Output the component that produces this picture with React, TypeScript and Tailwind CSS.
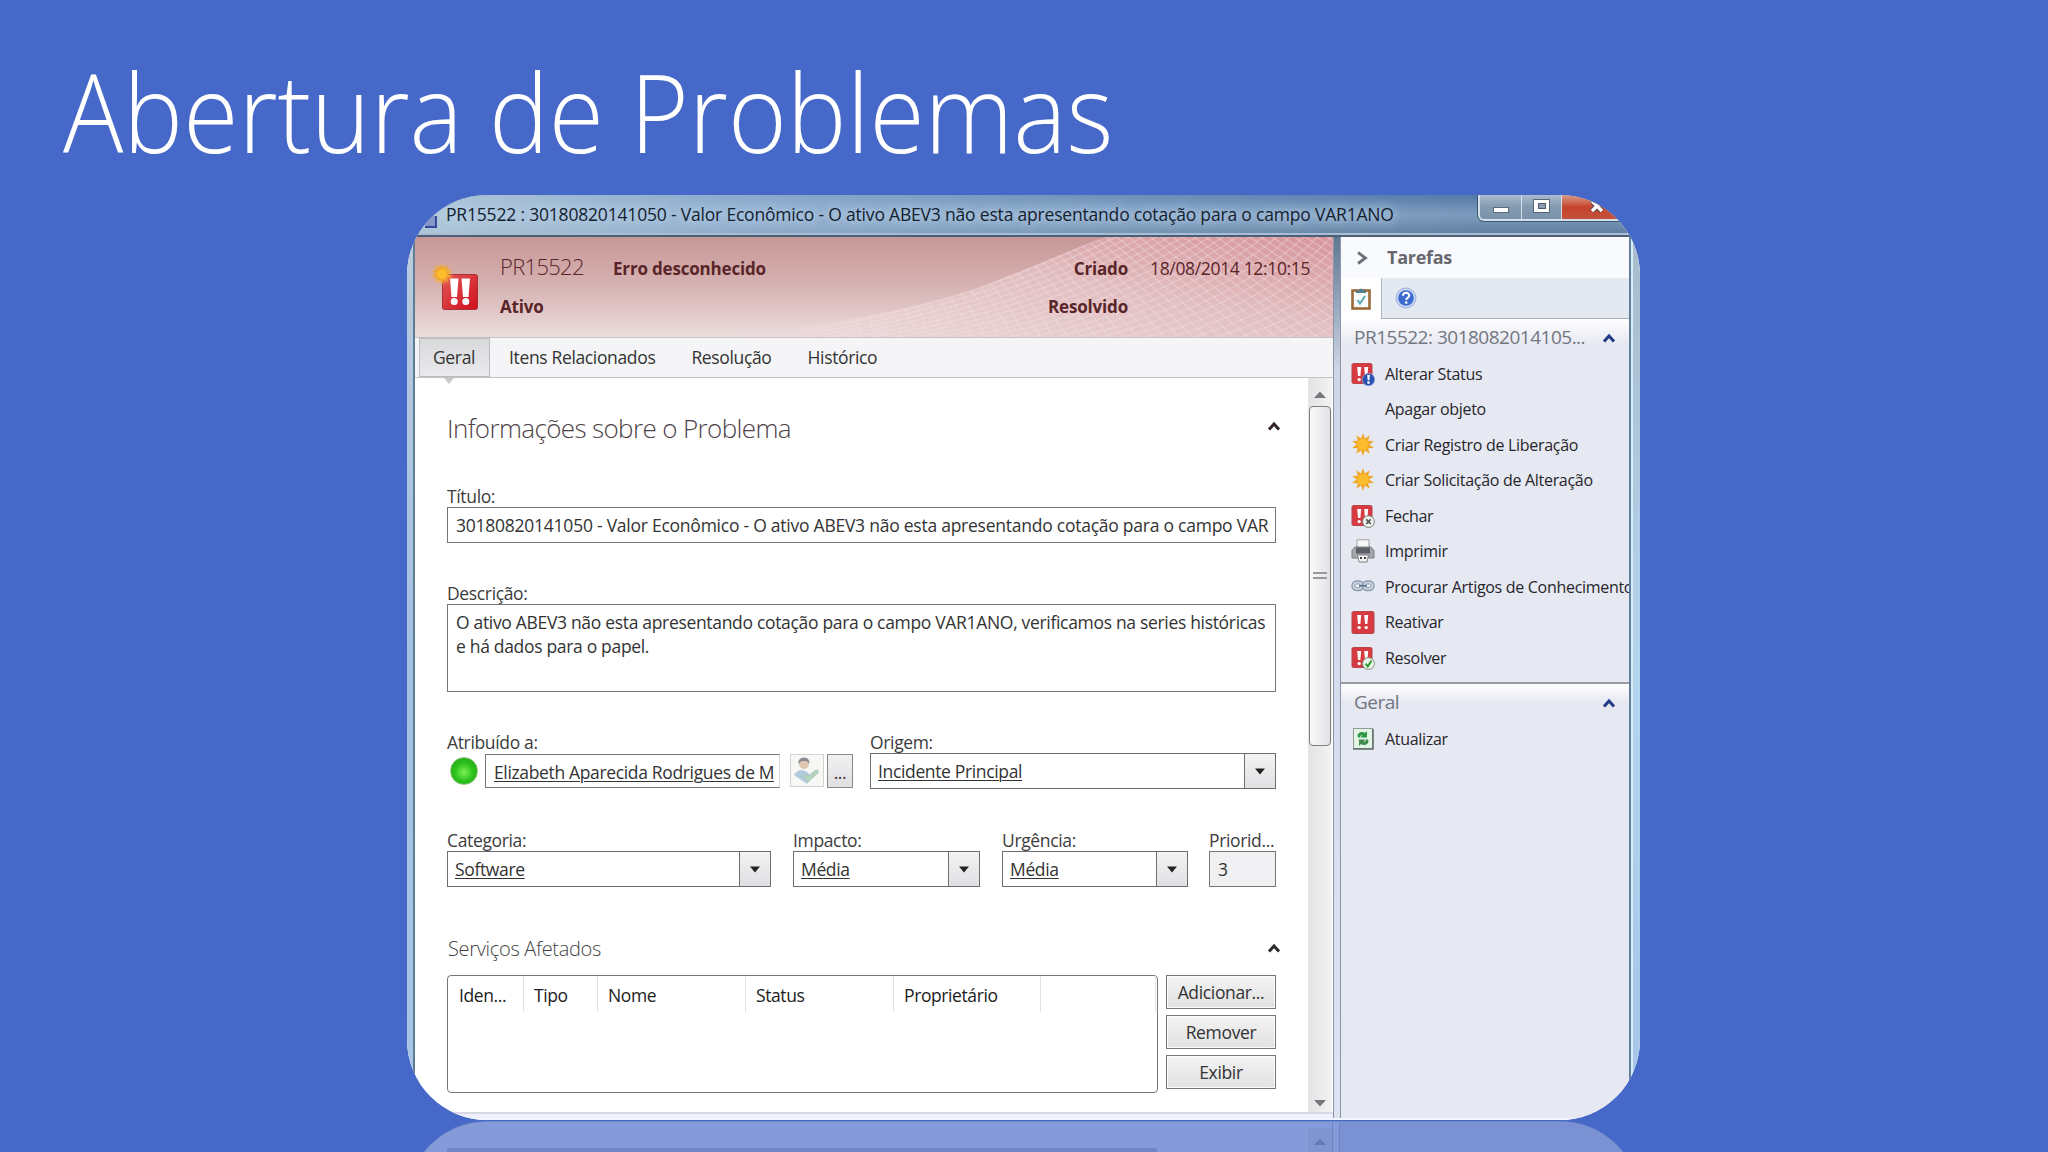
import React from "react";

type TaskIconName = "status" | "none" | "star" | "close" | "print" | "link" | "alert" | "resolve";

const TABS = ["Itens Relacionados", "Resolução", "Histórico"];

const TASKS: { label: string; icon: TaskIconName }[] = [
  { label: "Alterar Status", icon: "status" },
  { label: "Apagar objeto", icon: "none" },
  { label: "Criar Registro de Liberação", icon: "star" },
  { label: "Criar Solicitação de Alteração", icon: "star" },
  { label: "Fechar", icon: "close" },
  { label: "Imprimir", icon: "print" },
  { label: "Procurar Artigos de Conhecimento", icon: "link" },
  { label: "Reativar", icon: "alert" },
  { label: "Resolver", icon: "resolve" },
];

const COLUMNS = [
  { label: "Iden...", width: "w-[76px] pl-[11px]" },
  { label: "Tipo", width: "w-[74px] pl-2.5" },
  { label: "Nome", width: "w-[148px] pl-2.5" },
  { label: "Status", width: "w-[148px] pl-2.5" },
  { label: "Proprietário", width: "w-[147px] pl-2.5" },
  { label: "", width: "w-[115px]" },
];

/* ---------- icons ---------- */

const StarShape = ({ cx, cy, r }: { cx: number; cy: number; r: number }) => {
  const points = Array.from({ length: 20 }, (_, i) => {
    const radius = i % 2 ? r * 0.55 : r;
    const a = (Math.PI * i) / 10;
    return `${(cx + radius * Math.sin(a)).toFixed(2)},${(cy - radius * Math.cos(a)).toFixed(2)}`;
  }).join(" ");
  return (
    <>
      <polygon points={points} fill="#f0a728" />
      <circle cx={cx} cy={cy} r={r * 0.48} fill="#fcbd2c" />
    </>
  );
};

const AlertTile = ({ small }: { small?: boolean }) => (
  <>
    <rect x="1" y="1.5" width={small ? 20 : 22} height={small ? 20 : 22} rx="1.5" fill="#d83a42" stroke="#b5444b" />
    <path d="M6.2 5h4l-.8 9H7zM13.2 5h4l-.8 9H14z" fill="#fff" />
    <circle cx="8.2" cy="17.6" r="1.7" fill="#fff" />
    <circle cx="15.2" cy="17.6" r="1.7" fill="#fff" />
  </>
);

const TaskIcon = ({ name }: { name: TaskIconName }) => (
  <svg viewBox="0 0 24 24" className="h-6 w-6 shrink-0">
    {name === "status" && (
      <>
        <AlertTile small />
        <circle cx="17.5" cy="17.6" r="6.2" fill="#2a52b0" stroke="#8ea6d8" strokeWidth=".8" />
        <path d="M16.2 13h2.7l-.5 5.200h-1.700z" fill="#fff" />
        <circle cx="17.5" cy="20.600" r="1.300" fill="#fff" />
      </>
    )}
    {name === "star" && <StarShape cx={12} cy={11.5} r={11.5} />}
    {name === "close" && (
      <>
        <AlertTile small />
        <circle cx="17.500" cy="17.600" r="5.900" fill="#eef0ee" stroke="#777d78" />
        <path d="m15.300 15.400 4.400 4.400m0-4.400-4.400 4.400" stroke="#56605a" strokeWidth="1.800" />
      </>
    )}
    {name === "print" && (
      <>
        <path d="M6 .8h12V10H6z" fill="#f8f8f8" stroke="#a2a2a2" />
        <path d="M1 11.500 4 8h16l3 3.500V19H1z" fill="#a3a6ab" stroke="#7c7f84" />
        <path d="M5 8.500h14v6H5z" fill="#5c6065" />
        <path d="M6.500 16h11L16 23H8z" fill="#f4f4f4" stroke="#7e8186" />
        <path d="M9 19h2m2 0h2" stroke="#444" strokeWidth="2" />
      </>
    )}
    {name === "link" && (
      <g fill="none" stroke="#8a9db0">
        <rect x="1" y="6" width="11.500" height="9.500" rx="4.500" fill="#c9d4df" strokeWidth="1.400" />
        <rect x="11.500" y="6" width="11.500" height="9.500" rx="4.500" fill="#c9d4df" strokeWidth="1.400" />
        <rect x="4" y="9" width="5.500" height="3.500" rx="1.700" fill="#eef2f7" />
        <rect x="14.500" y="9" width="5.500" height="3.500" rx="1.700" fill="#eef2f7" />
        <path d="M8 10.800h8" stroke="#62778c" strokeWidth="1.800" />
      </g>
    )}
    {name === "alert" && <AlertTile />}
    {name === "resolve" && (
      <>
        <AlertTile small />
        <circle cx="17.500" cy="17.600" r="5.900" fill="#eef7ec" stroke="#7f8f80" />
        <path d="m14.600 17.600 2.200 2.800 3.700-5.800" fill="none" stroke="#2f9e38" strokeWidth="2" />
      </>
    )}
  </svg>
);

const RecordIcon = () => (
  <svg viewBox="0 0 50 50" className="h-[50px] w-[50px]">
    <defs>
      <linearGradient id="tile" x1="0" y1="0" x2="1" y2="1">
        <stop offset="0" stopColor="#e25a58" />
        <stop offset="1" stopColor="#cf0f1c" />
      </linearGradient>
      <radialGradient id="glow">
        <stop offset=".4" stopColor="#f8b52a" stopOpacity=".8" />
        <stop offset="1" stopColor="#f0a75c" stopOpacity="0" />
      </radialGradient>
    </defs>
    <rect x="12.500" y="11.500" width="35" height="35" rx="2" fill="url(#tile)" stroke="#a83236" />
    <path d="M20 15.500h8.500L27 34h-5.500zM31.500 15.500H40L38.500 34H33z" fill="#fff" />
    <circle cx="24.200" cy="38.500" r="3.500" fill="#fff" />
    <circle cx="35.800" cy="38.500" r="3.500" fill="#fff" />
    <circle cx="12" cy="11" r="12" fill="url(#glow)" />
    <StarShape cx={12} cy={11} r={10} />
  </svg>
);

const Caret = ({ color }: { color: string }) => (
  <svg viewBox="0 0 14 10" className="h-2.5 w-3.5">
    <path d="M2 8.500 7 3l5 5.500" fill="none" stroke={color} strokeWidth="3" />
  </svg>
);

const DownArrow = () => (
  <svg viewBox="0 0 12 7" className="h-[7px] w-3">
    <path d="M1 .5h10L6 6.500z" fill="#222" />
  </svg>
);

const HeaderMesh = () => (
  <svg viewBox="0 0 918 100" className="absolute inset-0 h-full w-full">
    <defs>
      <linearGradient id="mesh" x1="0" y1="1" x2="1" y2="0">
        <stop offset="0" stopColor="#ecdddd" />
        <stop offset=".55" stopColor="#e2bfc1" />
        <stop offset="1" stopColor="#d6959b" />
      </linearGradient>
      <clipPath id="wing">
        <path d="M310 100C410 86 480 78 560 52 620 30 640 18 691 0H918V100Z" />
      </clipPath>
    </defs>
    <g clipPath="url(#wing)">
      <path d="M300 0H918V100H300Z" fill="url(#mesh)" />
      <g fill="none" stroke="#f6e4e5" strokeOpacity=".32" strokeWidth="1.500">
        {Array.from({ length: 26 }, (_, i) => (
          <path key={i} d={`M${310 + i * 24} 104Q${520 + i * 20} ${84 - i} ${700 + i * 13} -6`} />
        ))}
        {Array.from({ length: 48 }, (_, i) => (
          <path key={i} d={`M${400 + i * 11} -4Q${440 + i * 12} 50 ${446 + i * 14} 104`} />
        ))}
      </g>
    </g>
  </svg>
);

/* ---------- form controls ---------- */

const Label = ({ children }: { children: React.ReactNode }) => (
  <div className="h-[22px] whitespace-nowrap leading-[22px] text-[#3c3c3c]">{children}</div>
);

const SelectField = ({ label, value, className }: { label: string; value: string; className: string }) => (
  <div className={className}>
    <Label>{label}</Label>
    <div className="flex h-9 items-center border border-[#6e6e72] bg-white">
      <span className="flex-1 pl-[7px] underline decoration-1 underline-offset-2">{value}</span>
      <span className="flex h-full w-[31px] items-center justify-center border-l border-[#6e6e72] bg-gradient-to-b from-[#f3f3f3] to-[#e0e0e3]">
        <DownArrow />
      </span>
    </div>
  </div>
);

const SideButton = ({ children }: { children: React.ReactNode }) => (
  <button className="flex h-[34px] items-center justify-center border border-[#77777a] bg-gradient-to-b from-[#f3f3f3] to-[#e1e1e3] shadow-[inset_0_0_0_1px_#fafafa]">
    {children}
  </button>
);

/* ---------- window parts ---------- */

const TitleBar = () => (
  <div className="flex h-[42px] shrink-0 border-b-2 border-[#4a6079] bg-gradient-to-b from-[#5279a8] via-[#7d9cbd] to-[#5f7e9f] shadow-[inset_0_-2px_0_#a9bed2]">
    <div className="flex h-[38px] w-[1071px] items-center bg-gradient-to-r from-[#c3d8e4]/80 via-[#a4c0dc]/70 via-30% to-transparent pl-[18px]">
      <div className="mt-4 h-3 w-3 border-b-2 border-r-2 border-[#39479a] bg-[#8796c8]" />
      <span className="ml-[9px] whitespace-nowrap tracking-[-0.19px] text-[#14212f] [text-shadow:0_0_8px_#b9d2ea,0_0_12px_#b9d2ea]">
        PR15522 : 30180820141050 - Valor Econômico - O ativo ABEV3 não esta apresentando cotação para o campo VAR1ANO
      </span>
    </div>
    <div className="flex h-[26px] flex-1 rounded-bl-md border-b-2 border-l-2 border-[#d3dfea] bg-gradient-to-b from-[#a9bccf] via-[#8399b0] to-[#7b93ab] outline outline-1 outline-[#3f566e]">
      <div className="flex w-[42px] items-center justify-center border-r border-[#d3dfea] pt-1.5">
        <div className="h-[6px] w-4 border border-[#5b6b7c] bg-white" />
      </div>
      <div className="flex w-10 items-center justify-center border-r border-[#d3dfea] pb-0.5">
        <div className="flex h-3.5 w-[17px] items-center justify-center border border-[#56677a] bg-white">
          <div className="h-1.5 w-2 border border-[#4a5b6d] bg-[#8b9cad]" />
        </div>
      </div>
      <div className="flex-1 bg-gradient-to-b from-[#d99a86] via-[#c4432c] to-[#c6513a] pl-[27px]">
        <svg viewBox="0 0 16 14" className="mt-1 h-3.5 w-4">
          <path d="m3 2 10 10M13 2 3 12" stroke="#6a4a48" strokeWidth="5.500" />
          <path d="m3 2 10 10M13 2 3 12" stroke="#fff" strokeWidth="3.300" />
        </svg>
      </div>
    </div>
  </div>
);

const RecordHeader = () => (
  <div className="relative h-[100px] bg-gradient-to-b from-[#c79797] via-[#d7b3b3] to-[#ebdcdc]">
    <HeaderMesh />
    <div className="relative flex pl-[15px] pt-2.5 text-[17px] font-bold tracking-[-0.18px] text-[#5a2529]">
      <div className="pt-4">
        <RecordIcon />
      </div>
      <div className="flex-1 pl-5">
        <div className="flex h-[38px] items-baseline leading-[38px]">
          <span className="w-[113px] text-[22px] font-light tracking-[-0.7px]">PR15522</span>
          <span>Erro desconhecido</span>
          <span className="ml-auto">Criado</span>
          <span className="ml-[22px] mr-[23px] w-40 whitespace-nowrap text-[17.5px] font-normal tracking-[-0.34px]">
            18/08/2014 12:10:15
          </span>
        </div>
        <div className="mt-[3px] flex h-[38px] justify-between pr-[205px] leading-[38px]">
          <span>Ativo</span>
          <span>Resolvido</span>
        </div>
      </div>
    </div>
  </div>
);

const TabStrip = () => (
  <div className="flex h-[41px] border-b border-t border-[#c3c3c6] bg-[#f5f5f7] pl-1 leading-[38px]">
    <div className="relative h-[39px] w-[71px] border border-[#bdbdc0] bg-gradient-to-b from-[#d9d9db] to-[#eaeaec] pl-[13px] leading-[37px]">
      Geral
      <div className="absolute left-[24px] top-[39px] h-0 w-0 border-x-[5px] border-t-[6px] border-x-transparent border-t-[#c9c9cc]" />
    </div>
    <div className="flex gap-9 pl-[19px]">
      {TABS.map((tab) => (
        <span key={tab}>{tab}</span>
      ))}
    </div>
  </div>
);

const ProblemForm = () => (
  <div className="w-[893px] px-8 pt-8">
    <div className="-mr-[5px] flex h-9 items-center justify-between">
      <h2 className="text-[26px] font-light leading-9 tracking-[-0.63px] text-[#4d4248]">Informações sobre o Problema</h2>
      <div className="pb-1">
        <Caret color="#33252a" />
      </div>
    </div>

    <div className="mt-[39px]">
      <Label>Título:</Label>
      <div className="flex h-9 items-center overflow-hidden whitespace-nowrap border border-[#77777a] pl-2 pt-px tracking-[-0.245px]">
        30180820141050 - Valor Econômico - O ativo ABEV3 não esta apresentando cotação para o campo VAR
      </div>
    </div>

    <div className="mt-[39px]">
      <Label>Descrição:</Label>
      <div className="h-[88px] border border-[#77777a] pl-2 pt-[5px] leading-6 tracking-[-0.32px]">
        O ativo ABEV3 não esta apresentando cotação para o campo VAR1ANO, verificamos na series históricas
        <br />e há dados para o papel.
      </div>
    </div>

    <div className="mt-[39px] flex">
      <div className="w-[423px]">
        <Label>Atribuído a:</Label>
        <div className="flex pt-px">
          <div className="ml-[3px] mt-[3px] h-7 w-7 rounded-full border border-[#8cc47c] bg-[radial-gradient(circle_at_50%_55%,#7df05a_0%,#2fc41d_45%,#1a9a12_100%)]" />
          <div className="ml-[7px] flex h-[34px] w-[295px] items-center border border-[#77777a] border-r-[#d5d5d8] pl-2 pt-0.5">
            <span className="w-[280px] overflow-hidden whitespace-nowrap underline decoration-1 underline-offset-2">
              Elizabeth Aparecida Rodrigues de M
            </span>
          </div>
          <div className="ml-2.5 h-[33px] w-[34px] border border-[#d3d5d3] bg-[#f7f8f5]">
            <svg viewBox="0 0 32 31" className="h-full w-full">
              <path d="M3 20q3-5 8-5 6 1 9 7l-4 7z" fill="#b4cbdf" />
              <circle cx="13" cy="9" r="5" fill="#e0c6b3" />
              <path d="M7.500 9q-1-6 5.500-6.500 5.500.2 5.500 6l-3-2.600-5 .2z" fill="#8b8a92" />
              <path d="m12 21 5 6 10-9v-3l-3 .5-6.500 5.500-3-2z" fill="#b4d5bd" stroke="#9dbdb2" strokeWidth=".7" />
            </svg>
          </div>
          <div className="ml-[3px] flex h-[34px] w-[26px] items-center justify-center border border-[#88888b] bg-gradient-to-b from-[#f1f1f2] to-[#dfdfe2] pt-0.5">
            ...
          </div>
        </div>
      </div>
      <SelectField label="Origem:" value="Incidente Principal" className="w-[406px]" />
    </div>

    <div className="mt-10 flex">
      <SelectField label="Categoria:" value="Software" className="w-[324px]" />
      <SelectField label="Impacto:" value="Média" className="ml-[22px] w-[187px]" />
      <SelectField label="Urgência:" value="Média" className="ml-[22px] w-[186px]" />
      <div className="ml-[21px] w-[67px] flex-1">
        <Label>Priorid...</Label>
        <div className="flex h-9 items-center border border-[#77777a] bg-[#f0f0f2] pl-2">3</div>
      </div>
    </div>

    <div className="-mr-[5px] mt-12 flex h-7 items-center justify-between pl-px">
      <h3 className="text-xl font-light leading-7 tracking-[-0.32px] text-[#3f3f42]">Serviços Afetados</h3>
      <div className="pb-0.5">
        <Caret color="#2a2a2c" />
      </div>
    </div>

    <div className="mt-3 flex gap-2">
      <div className="h-[118px] w-[711px] rounded-sm border border-[#77777a]">
        <div className="flex h-9">
          {COLUMNS.map((col) => (
            <div key={col.width + col.label} className={`${col.width} border-r border-[#e3e0e6] pt-1 leading-[30px] tracking-[-0.4px] text-[#222]`}>
              {col.label}
            </div>
          ))}
        </div>
      </div>
      <div className="flex w-[110px] flex-col gap-1.5">
        <SideButton>Adicionar...</SideButton>
        <SideButton>Remover</SideButton>
        <SideButton>Exibir</SideButton>
      </div>
    </div>
  </div>
);

const ScrollBar = () => (
  <div className="flex w-6 flex-col items-center bg-gradient-to-r from-[#e3e3e5] to-[#f3f3f4]">
    <svg viewBox="0 0 12 7" className="mt-[13px] h-[7px] w-3">
      <path d="M0 7h12L6 .5z" fill="#77777b" />
    </svg>
    <div className="mt-2 flex h-[340px] w-[22px] flex-col items-center justify-center gap-[3px] rounded-sm border border-[#7d7d82] bg-gradient-to-r from-[#fafafa] to-[#e2e2e6] pb-0.5">
      <div className="h-0.5 w-3.5 bg-[#98989c]" />
      <div className="h-0.5 w-3.5 bg-[#98989c]" />
    </div>
    <svg viewBox="0 0 12 7" className="mb-[5px] mt-auto h-[7px] w-3">
      <path d="M0 0h12L6 6.500z" fill="#77777b" />
    </svg>
  </div>
);

const TasksPane = () => (
  <div className="flex w-[288px] flex-col overflow-hidden bg-[#e6e8f2] text-base tracking-[-0.3px] text-[#26262b]">
    <div className="flex h-[41px] shrink-0 items-center bg-[#f9fafe] pl-[15px]">
      <svg viewBox="0 0 12 14" className="h-3.5 w-3">
        <path d="m2 1.500 7.500 5.500L2 12.500" fill="none" stroke="#6c6f76" strokeWidth="2.800" />
      </svg>
      <span className="ml-[19px] pb-0.5 text-lg font-bold tracking-[-0.27px] text-[#66686e]">Tarefas</span>
    </div>

    <div className="flex h-[41px] shrink-0">
      <div className="flex w-10 items-center justify-center bg-white">
        <svg viewBox="0 0 20 22" className="h-[22px] w-5">
          <rect x="1.500" y="2.500" width="17" height="18" fill="#f7f9fb" stroke="#9a6a38" strokeWidth="2.600" />
          <path d="M5 5V2.500h3q2-4 4 0h3V5z" fill="#4e7f92" />
          <path d="m6.500 12 2.500 3.500 5-7.500" fill="none" stroke="#5aa9b4" strokeWidth="2" />
        </svg>
      </div>
      <div className="flex flex-1 items-center border-b border-l border-[#aeb2bd] bg-[#e4e8f1] pl-[13px]">
        <svg viewBox="0 0 22 22" className="h-[22px] w-[22px]">
          <circle cx="11" cy="11" r="10" fill="#cbd7f3" stroke="#9db2e2" />
          <circle cx="11" cy="11" r="7.800" fill="#3d6ad0" />
          <path d="M8 8.800q0-3 3-3t3.200 2.700q0 1.600-1.700 2.400-1.200.6-1.200 2.100" fill="none" stroke="#fff" strokeWidth="2" />
          <circle cx="11.200" cy="15.600" r="1.300" fill="#fff" />
        </svg>
      </div>
    </div>

    <div className="flex h-[37px] shrink-0 items-center justify-between bg-gradient-to-b from-white to-[#e6e8f2] to-70% px-[13px]">
      <span className="text-[19px] tracking-[-0.5px] text-[#73767f]">PR15522: 3018082014105...</span>
      <Caret color="#233a86" />
    </div>
    {TASKS.map((task) => (
      <div key={task.label} className="flex h-[35.5px] shrink-0 items-center gap-2.5 whitespace-nowrap pl-[10px]">
        <TaskIcon name={task.icon} />
        <span>{task.label}</span>
      </div>
    ))}

    <div className="mt-1.5 flex h-10 shrink-0 items-center justify-between border-t-2 border-[#9a9ca4] bg-gradient-to-b from-white to-[#e6e8f2] to-50% px-[13px]">
      <span className="text-[19px] tracking-[-0.5px] text-[#73767f]">Geral</span>
      <Caret color="#233a86" />
    </div>
    <div className="flex h-[35.5px] shrink-0 items-center gap-2.5 pl-[10px]">
      <svg viewBox="0 0 24 24" className="h-6 w-6">
        <rect x="2.500" y="1.500" width="19" height="20" fill="#e3f3e4" stroke="#8f9a95" />
        <path d="M2 22h20V2" fill="none" stroke="#5d6b66" strokeWidth="1.500" />
        <path d="M7 10.500 6.500 8Q8 4.500 12 5l2 1 2-2v6.500h-6.500l2-2.200q-2-.8-2.500 2.200z" fill="#2d9a41" />
        <path d="m17 12.500.5 2.500Q16 18.500 12 18l-2-1-2 2v-6.500h6.500l-2 2.200q2 .8 2.500-2.200z" fill="#3d8a4c" />
      </svg>
      <span>Atualizar</span>
    </div>
  </div>
);

const AppWindow = () => (
  <div className="ml-[407px] flex h-[925px] w-[1233px] flex-col overflow-hidden rounded-[80px] bg-white text-[17.5px] tracking-[-0.35px] text-[#333]">
    <TitleBar />
    <div className="flex min-h-0 flex-1 border-b-2 border-[#f3f6ff]">
      <div className="w-2 border-r-2 border-[#5d7d97] bg-gradient-to-b from-[#b9cadb] via-[#a3c0e2] to-[#a9c6e8]" />
      <div className="flex w-[918px] flex-col">
        <RecordHeader />
        <TabStrip />
        <div className="flex flex-1 border-b-2 border-[#d9d9e6]">
          <ProblemForm />
          <ScrollBar />
        </div>
        <div className="h-1 bg-[#eef1fd]" />
      </div>
      <div className="w-2 border-x border-[#8c95ab] bg-gradient-to-b from-[#5f7890] via-[#cfd6e6] via-15% to-[#dde3f1]" />
      <TasksPane />
      <div className="flex-1 border-l-2 border-[#5f7f9d] bg-gradient-to-b from-[#a9bccd] via-[#b4d5ee] to-[#a6c4e8] shadow-[inset_2px_0_0_#d9ecf8]" />
    </div>
  </div>
);

const Reflection = () => (
  <div className="ml-[407px] mt-px h-[31px] w-[1233px] overflow-hidden">
    <div className="flex h-40 rounded-t-[80px] border-t border-[#7088c4] bg-[#859bd9] pl-10">
      <div className="mt-[26px] h-2 w-[710px] bg-[#6f87c6]" />
      <div className="ml-[151px] mt-1.5 flex w-6 justify-center bg-[#7f94d1]">
        <svg viewBox="0 0 12 7" className="mt-2.5 h-[7px] w-3">
          <path d="M0 7h12L6 .5z" fill="#6079bd" />
        </svg>
      </div>
      <div className="w-2 border-x border-[#6a83c6]" />
      <div className="flex-1 rounded-tr-[80px] bg-[#7a91d3]" />
    </div>
  </div>
);

export default function App() {
  return (
    <div className="h-[1152px] w-[2048px] overflow-hidden bg-[#4668c8] pt-[50px] font-['Open_Sans','Noto_Sans',sans-serif]">
      <h1 className="mb-[25px] ml-[63px] h-[120px] w-max origin-left scale-x-[0.922] text-[109px] font-light leading-[122px] text-white">
        Abertura de Problemas
      </h1>
      <AppWindow />
      <Reflection />
    </div>
  );
}
